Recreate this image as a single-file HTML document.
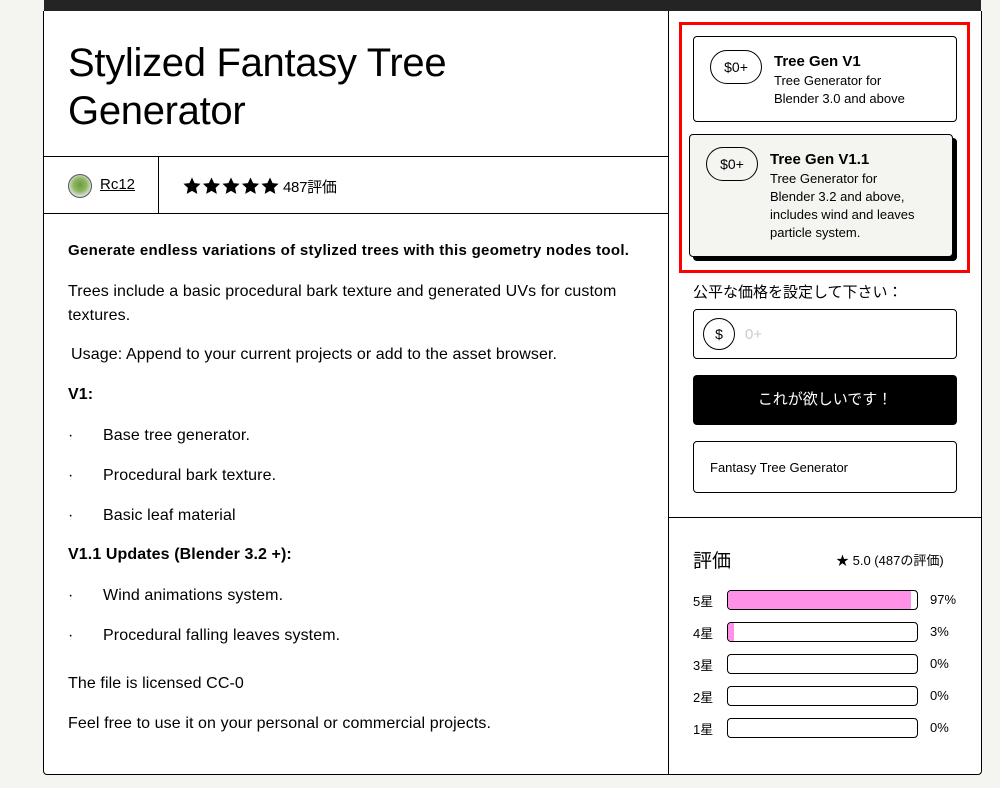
<!DOCTYPE html>
<html><head><meta charset="utf-8"><style>
*{box-sizing:border-box;margin:0;padding:0}
body{width:1000px;height:788px;background:#f4f4f0;font-family:"Liberation Sans","Noto Sans CJK JP",sans-serif;color:#000;position:relative;overflow:hidden}
.abs{position:absolute}
.topbar{left:44px;top:0;width:937px;height:12px;background:#242424}
.card{left:43px;top:11px;width:939px;height:764px;background:#fff;border:1px solid #000;border-top:none;border-radius:0 0 4px 4px}
.vline{left:668px;top:11px;width:1px;height:763px;background:#000}
.hline{height:1px;background:#000}
h1{position:absolute;left:68px;top:39px;font-size:40px;font-weight:400;line-height:48px;letter-spacing:-0.3px}
.p{position:absolute;left:68px;font-size:16px;letter-spacing:0.1px;white-space:nowrap}
.opt{border:1px solid #000;border-radius:4px;background:#fff}
.pill{position:absolute;border:1px solid #000;border-radius:20px;width:52px;height:34px;font-size:14px;text-align:center;line-height:32px}
.ot{position:absolute;font-size:13px;line-height:18px}
.ot b{font-size:15px;display:block;line-height:20px}
.bar{position:absolute;left:727px;width:191px;height:20px;border:1px solid #000;border-radius:4px;overflow:hidden}
.bar i{display:block;height:100%;background:#ff90e8}
.rl{position:absolute;left:693px;font-size:13px}
.rp{position:absolute;left:930px;font-size:13px}
</style></head><body>
<div class="abs topbar"></div>
<div class="abs card"></div>
<div class="abs vline"></div>
<h1>Stylized Fantasy Tree<br>Generator</h1>
<div class="abs hline" style="left:43px;top:156px;width:625px"></div>
<div class="abs hline" style="left:43px;top:213px;width:625px"></div>
<div class="abs" style="left:158px;top:156px;width:1px;height:57px;background:#000"></div>
<div class="abs" style="left:68px;top:174px;width:24px;height:24px;border-radius:50%;border:1px solid #555;background:radial-gradient(circle at 50% 45%,#6a9a40 0,#8cb860 40%,#ddd 70%)"></div>
<div class="abs" style="left:100px;top:176px;font-size:15px;text-decoration:underline">Rc12</div>
<svg class="abs" style="left:183px;top:177px" width="98" height="18" viewBox="0 0 98 18">
<defs><path id="s" d="M9 0.5l2.6 5.6 6 .7-4.5 4.1 1.2 6L9 13.9 3.7 16.9l1.2-6L.4 6.8l6-.7z"/></defs>
<use href="#s" x="0"/><use href="#s" x="19.5"/><use href="#s" x="39"/><use href="#s" x="58.5"/><use href="#s" x="78"/></svg>
<div class="abs" style="left:283px;top:176px;font-size:15px;letter-spacing:-0.3px">487評価</div>
<div class="p" style="top:242px;font-weight:700;font-size:15px;letter-spacing:0.3px">Generate endless variations of stylized trees with this geometry nodes tool.</div>
<div class="p" style="top:283px">Trees include a basic procedural bark texture and generated UVs for custom</div>
<div class="p" style="top:307px">textures.</div>
<div class="p" style="top:346px;left:71px">Usage: Append to your current projects or add to the asset browser.</div>
<div class="p" style="top:386px;font-weight:700">V1:</div>
<div class="p" style="top:427px">·</div><div class="p" style="top:427px;left:103px">Base tree generator.</div>
<div class="p" style="top:467px">·</div><div class="p" style="top:467px;left:103px">Procedural bark texture.</div>
<div class="p" style="top:507px">·</div><div class="p" style="top:507px;left:103px">Basic leaf material</div>
<div class="p" style="top:546px;font-weight:700">V1.1 Updates (Blender 3.2 +):</div>
<div class="p" style="top:587px">·</div><div class="p" style="top:587px;left:103px">Wind animations system.</div>
<div class="p" style="top:627px">·</div><div class="p" style="top:627px;left:103px">Procedural falling leaves system.</div>
<div class="p" style="top:675px">The file is licensed CC-0</div>
<div class="p" style="top:715px">Feel free to use it on your personal or commercial projects.</div>

<div class="abs" style="left:679px;top:22px;width:291px;height:251px;border:3px solid #f00"></div>
<div class="abs opt" style="left:693px;top:36px;width:264px;height:86px"></div>
<div class="pill" style="left:710px;top:50px">$0+</div>
<div class="ot" style="left:774px;top:52px"><b>Tree Gen V1</b>Tree Generator for<br>Blender 3.0 and above</div>
<div class="abs" style="left:693px;top:138px;width:264px;height:123px;background:#000;border-radius:4px"></div>
<div class="abs opt" style="left:689px;top:134px;width:264px;height:123px;background:#f4f4f0"></div>
<div class="pill" style="left:706px;top:147px">$0+</div>
<div class="ot" style="left:770px;top:150px"><b>Tree Gen V1.1</b>Tree Generator for<br>Blender 3.2 and above,<br>includes wind and leaves<br>particle system.</div>
<div class="abs" style="left:693px;top:281px;font-size:15px">公平な価格を設定して下さい：</div>
<div class="abs opt" style="left:693px;top:309px;width:264px;height:50px"></div>
<div class="abs" style="left:703px;top:318px;width:32px;height:32px;border:1px solid #000;border-radius:50%;text-align:center;line-height:30px;font-size:14px">$</div>
<div class="abs" style="left:745px;top:326px;font-size:15px;color:#ccc">0+</div>
<div class="abs" style="left:693px;top:375px;width:264px;height:50px;background:#000;border-radius:4px;color:#fff;text-align:center;line-height:50px;font-size:15px">これが欲しいです！</div>
<div class="abs opt" style="left:693px;top:441px;width:264px;height:52px"></div>
<div class="abs" style="left:710px;top:460px;font-size:13px">Fantasy Tree Generator</div>
<div class="abs hline" style="left:668px;top:517px;width:314px"></div>
<div class="abs" style="left:693px;top:546px;font-size:19px">評価</div>
<div class="abs" style="left:836px;top:550px;font-size:13px">★ 5.0 (487の評価)</div>
<div class="rl" style="top:591px">5星</div><div class="bar" style="top:590px"><i style="width:97%"></i></div><div class="rp" style="top:592px">97%</div>
<div class="rl" style="top:623px">4星</div><div class="bar" style="top:622px"><i style="width:3%"></i></div><div class="rp" style="top:624px">3%</div>
<div class="rl" style="top:655px">3星</div><div class="bar" style="top:654px"></div><div class="rp" style="top:656px">0%</div>
<div class="rl" style="top:687px">2星</div><div class="bar" style="top:686px"></div><div class="rp" style="top:688px">0%</div>
<div class="rl" style="top:719px">1星</div><div class="bar" style="top:718px"></div><div class="rp" style="top:720px">0%</div>
</body></html>
